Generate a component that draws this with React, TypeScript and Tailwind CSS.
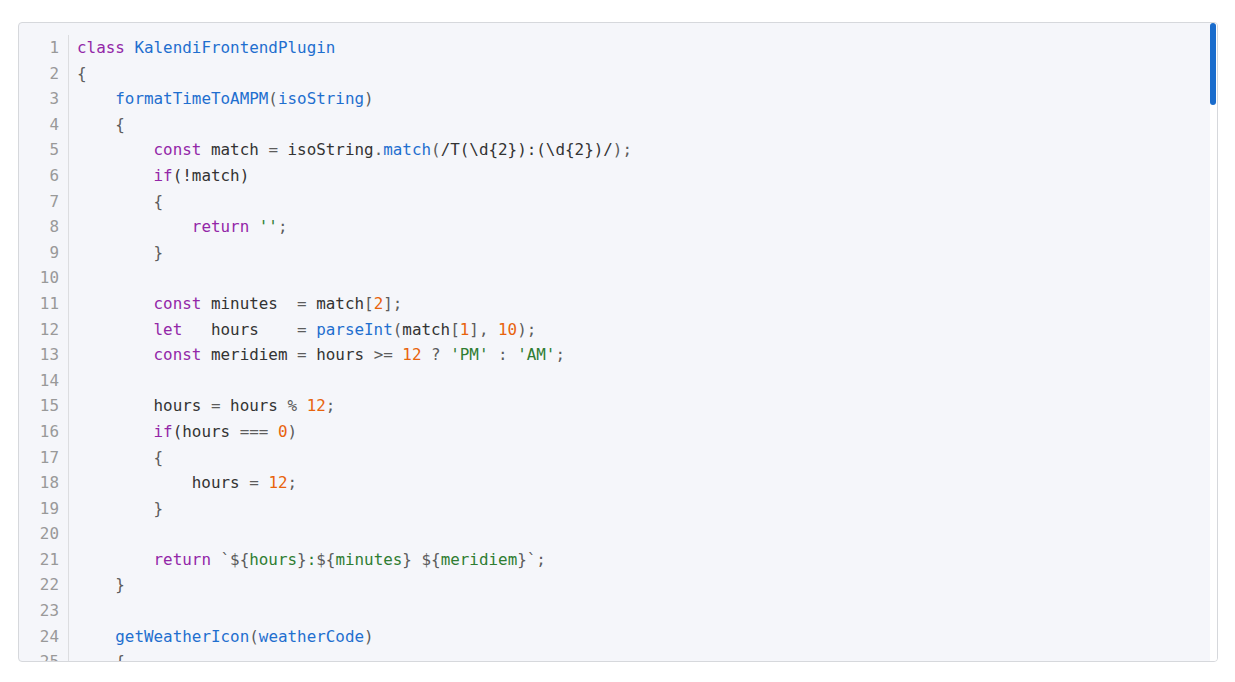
type Tok = [string, string?];

// token colour classes
const K = "text-[#9327a8]"; // keyword
const F = "text-[#1f6fcf]"; // function / class names
const N = "text-[#e8630c]"; // numbers
const S = "text-[#2f7d32]"; // strings
const P = "text-[#5c5c5c]"; // punctuation

const lines: Tok[][] = [
  [["class", K], [" "], ["KalendiFrontendPlugin", F]],
  [["{", P]],
  [["    "], ["formatTimeToAMPM", F], ["(", P], ["isoString", F], [")", P]],
  [["    "], ["{", P]],
  [
    ["        "],
    ["const", K],
    [" match "],
    ["=", P],
    [" isoString"],
    [".", P],
    ["match", F],
    ["(", P],
    ["/T(\\d{2}):(\\d{2})/"],
    [");", P],
  ],
  [["        "], ["if", K], ["(!match)"]],
  [["        "], ["{", P]],
  [["            "], ["return", K], [" "], ["''", S], [";", P]],
  [["        "], ["}", P]],
  [],
  [["        "], ["const", K], [" minutes  "], ["=", P], [" match"], ["[", P], ["2", N], ["];", P]],
  [
    ["        "],
    ["let", K],
    ["   hours    "],
    ["=", P],
    [" "],
    ["parseInt", F],
    ["(", P],
    ["match"],
    ["[", P],
    ["1", N],
    ["], ", P],
    ["10", N],
    [");", P],
  ],
  [
    ["        "],
    ["const", K],
    [" meridiem "],
    ["=", P],
    [" hours "],
    [">=", P],
    [" "],
    ["12", N],
    [" ? ", P],
    ["'PM'", S],
    [" : ", P],
    ["'AM'", S],
    [";", P],
  ],
  [],
  [["        hours "], ["=", P], [" hours "], ["%", P], [" "], ["12", N], [";", P]],
  [["        "], ["if", K], ["(hours "], ["===", P], [" "], ["0", N], [")", P]],
  [["        "], ["{", P]],
  [["            hours "], ["=", P], [" "], ["12", N], [";", P]],
  [["        "], ["}", P]],
  [],
  [
    ["        "],
    ["return", K],
    [" "],
    ["`${", P],
    ["hours", S],
    ["}", P],
    [":", S],
    ["${", P],
    ["minutes", S],
    ["}", P],
    [" ", S],
    ["${", P],
    ["meridiem", S],
    ["}`", P],
    [";", P],
  ],
  [["    "], ["}", P]],
  [],
  [["    "], ["getWeatherIcon", F], ["(", P], ["weatherCode", F], [")", P]],
  [["    "], ["{", P]],
];

const App = () => {
  return (
    <div className="min-h-[682px] bg-white pt-[22px] pl-[18px]">
      <div className="flex h-[640px] w-[1200px] overflow-hidden rounded-[4px] border border-[#d6d8dc] bg-[#f5f6fa]">
        <div
          className="flex-1 overflow-hidden pt-[12px] text-[15.9px] leading-[25.6px] text-[#333333]"
          style={{ fontFamily: '"DejaVu Sans Mono", "Liberation Mono", monospace' }}
        >
          <div className="flex">
            <div className="w-[50px] shrink-0 border-r border-[#dcdde0] pr-[9px] text-right text-[#999999]">
              {lines.map((_, i) => (
                <div key={i} className="h-[25.6px]">
                  {i + 1}
                </div>
              ))}
            </div>
            <div className="flex-1 whitespace-pre pl-[8px]">
              {lines.map((toks, i) => (
                <div key={i} className="h-[25.6px]">
                  {toks.map(([t, c], j) => (
                    <span key={j} className={c}>
                      {t}
                    </span>
                  ))}
                </div>
              ))}
            </div>
          </div>
        </div>
        <div className="w-[7px] shrink-0 bg-white">
          <div className="h-[82px] w-[6px] rounded-full bg-[#1a6ccc]" />
        </div>
      </div>
    </div>
  );
};

export default App;
